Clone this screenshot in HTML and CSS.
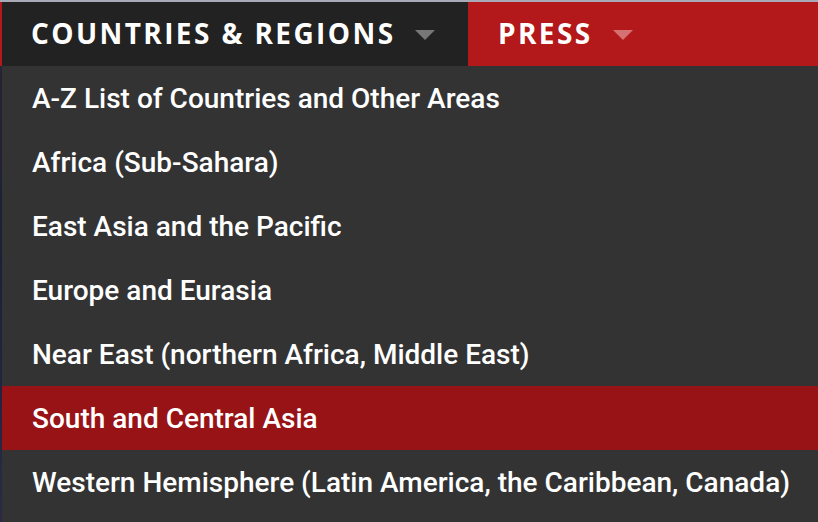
FILE: index.html
```html
<!DOCTYPE html>
<html>
<head>
<meta charset="utf-8">
<link rel="stylesheet" href="styles.css">
</head>
<body>
<div class="topline"></div>
<nav class="nav">
  <div class="nav-item nav-item--active">
    <span class="nav-label">Countries &amp; Regions</span>
    <span class="caret caret--grey"></span>
  </div>
  <div class="nav-item nav-item--red">
    <span class="nav-label">Press</span>
    <span class="caret caret--pink"></span>
  </div>
</nav>
<ul class="menu">
  <li class="menu-row">A-Z List of Countries and Other Areas</li>
  <li class="menu-row">Africa (Sub-Sahara)</li>
  <li class="menu-row">East Asia and the Pacific</li>
  <li class="menu-row">Europe and Eurasia</li>
  <li class="menu-row">Near East (northern Africa, Middle East)</li>
  <li class="menu-row menu-row--hover">South and Central Asia</li>
  <li class="menu-row">Western Hemisphere (Latin America, the Caribbean, Canada)</li>
</ul>
</body>
</html>
```
FILE: styles.css
```css
html, body {
  margin: 0;
  padding: 0;
}
body {
  background: linear-gradient(180deg, #2a2430 0%, #1b2038 50%, #2a2a44 100%);
  height: 522px;
  overflow: hidden;
}
.topline {
  height: 2px;
  background: #a9aab8;
}
.nav {
  display: flex;
  height: 64px;
  border-left: 2px solid #b3181a;
}
.nav-item {
  display: flex;
  align-items: center;
  box-sizing: border-box;
}
.nav-item--active {
  width: 466px;
  background: #222222;
  padding-left: 29px;
}
.nav-item--red {
  flex: 1;
  background: #b3181a;
  padding-left: 30px;
}
.nav-label {
  font-family: "Open Sans", "DejaVu Sans", sans-serif;
  font-weight: 700;
  font-size: 28px;
  letter-spacing: 2.4px;
  text-transform: uppercase;
  color: #ffffff;
  margin-top: -2px;
}
.caret {
  width: 0;
  height: 0;
  border-left: 10px solid transparent;
  border-right: 10px solid transparent;
  border-top: 10px solid #777777;
  margin-left: 20px;
  margin-top: 2px;
}
.caret--pink {
  border-top-color: #d67173;
}
.menu {
  list-style: none;
  margin: 0 0 0 2px;
  padding: 0 0 8px 0;
  background: #333333;
}
.menu-row {
  height: 64px;
  display: flex;
  align-items: center;
  padding-left: 30px;
  font-family: Roboto, "Liberation Sans", sans-serif;
  font-weight: 500;
  font-size: 28px;
  color: #ffffff;
}
.menu-row--hover {
  background: #981315;
}
```
